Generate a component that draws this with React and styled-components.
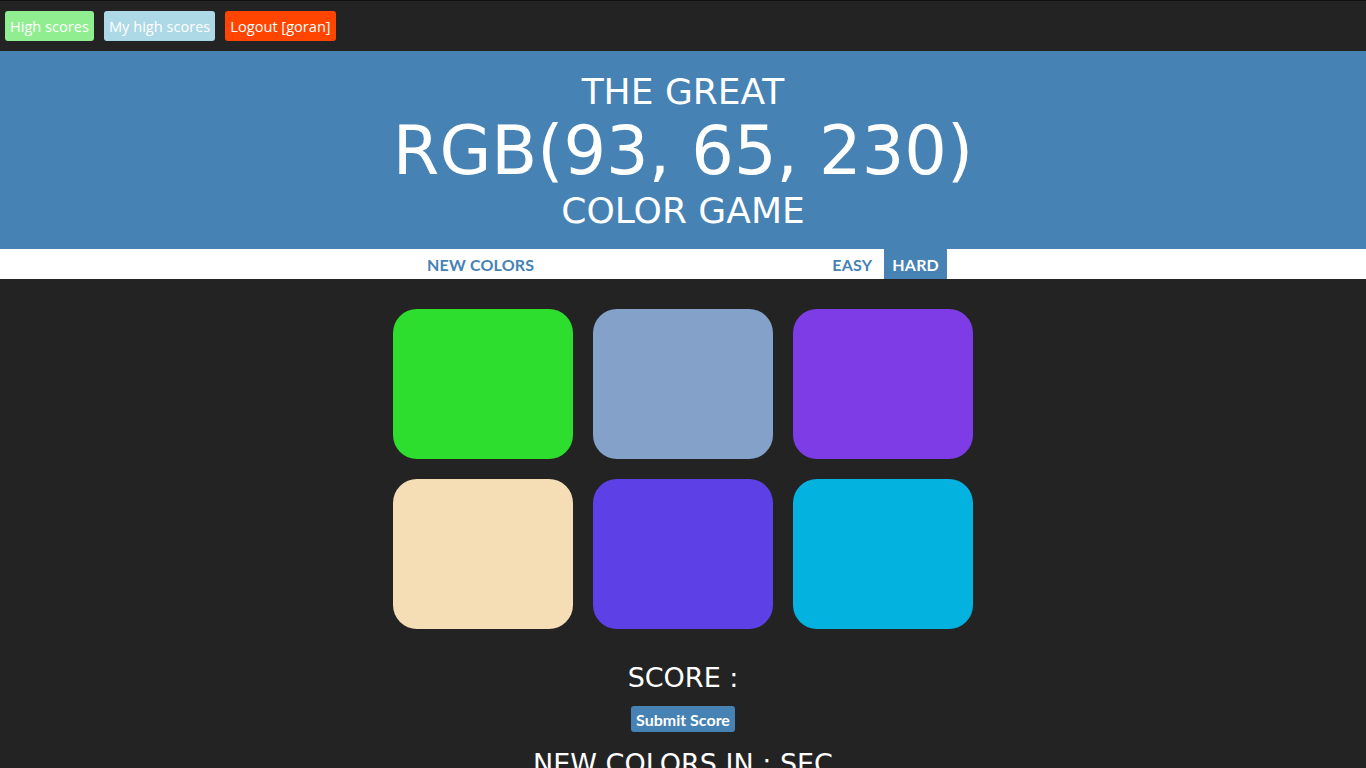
import { useState } from 'react';
import styled, { createGlobalStyle } from 'styled-components';

const GlobalStyle = createGlobalStyle`
  body {
    margin: 0;
    background: #232323;
    font-family: 'DejaVu Sans', sans-serif;
  }
  #root {
    border-top: 1px solid #111;
  }
`;

const TopBar = styled.div`
  height: 50px;
  display: flex;
  align-items: center;
  gap: 10px;
  padding-left: 5px;
`;

const TopButton = styled.button`
  background: ${(p) => p.bg};
  color: #fff;
  border: none;
  border-radius: 3px;
  height: 30px;
  padding: 0 5px;
  font-family: 'Open Sans', sans-serif;
  font-size: 14.6px;
  cursor: pointer;
`;

const Header = styled.div`
  background: steelblue;
  color: #fff;
  text-align: center;
  padding: 21px 0 19px;
  font-weight: normal;
  line-height: 1.1;
  .small {
    font-size: 36px;
  }
  .big {
    font-size: 67px;
    line-height: 1.18;
  }
`;

const Nav = styled.div`
  background: #fff;
  height: 30px;
  display: flex;
  justify-content: center;
  align-items: stretch;
  gap: 4px;
`;

const NavButton = styled.button`
  background: ${(p) => (p.selected ? 'steelblue' : '#fff')};
  color: ${(p) => (p.selected ? '#fff' : 'steelblue')};
  border: none;
  padding: 0 8px;
  font-family: Lato, sans-serif;
  font-weight: 700;
  font-size: 16px;
  letter-spacing: 0.2px;
  text-transform: uppercase;
  cursor: pointer;
`;

const Message = styled.span`
  width: 274px;
`;

const Board = styled.div`
  width: 600px;
  margin: 20px auto 0;
  display: flex;
  flex-wrap: wrap;
`;

const Square = styled.div`
  width: 180px;
  height: 150px;
  margin: 10px;
  border-radius: 24px;
  background: ${(p) => p.color};
`;

const Score = styled.h2`
  margin: 23px 0 0;
  text-align: center;
  color: #fff;
  font-weight: normal;
  font-size: 27px;
`;

const SubmitButton = styled.button`
  display: block;
  margin: 13px auto 0;
  background: steelblue;
  color: #fff;
  border: none;
  border-radius: 3px;
  height: 26px;
  padding: 0 5px;
  font-family: Lato, sans-serif;
  font-weight: 700;
  font-size: 16px;
`;

const Timer = styled.h2`
  margin: 16px 0 40px;
  text-align: center;
  color: #fff;
  font-weight: normal;
  font-size: 27px;
`;

const colors = [
  'rgb(46, 222, 46)',
  'rgb(132, 161, 202)',
  'rgb(126, 60, 230)',
  'rgb(245, 222, 182)',
  'rgb(93, 65, 230)',
  'rgb(4, 178, 223)',
];

export default function App() {
  const [mode, setMode] = useState('hard');

  return (
    <>
      <GlobalStyle />
      <TopBar>
        <TopButton bg="#90ee90">High scores</TopButton>
        <TopButton bg="#add8e6">My high scores</TopButton>
        <TopButton bg="#ff4500">Logout [goran]</TopButton>
      </TopBar>
      <Header>
        <div className="small">THE GREAT</div>
        <div className="big">RGB(93, 65, 230)</div>
        <div className="small">COLOR GAME</div>
      </Header>
      <Nav>
        <NavButton>New Colors</NavButton>
        <Message />
        <NavButton selected={mode === 'easy'} onClick={() => setMode('easy')}>
          Easy
        </NavButton>
        <NavButton selected={mode === 'hard'} onClick={() => setMode('hard')}>
          Hard
        </NavButton>
      </Nav>
      <Board>
        {colors.map((c) => (
          <Square key={c} color={c} />
        ))}
      </Board>
      <Score>SCORE :</Score>
      <SubmitButton>Submit Score</SubmitButton>
      <Timer>NEW COLORS IN : SEC</Timer>
    </>
  );
}
